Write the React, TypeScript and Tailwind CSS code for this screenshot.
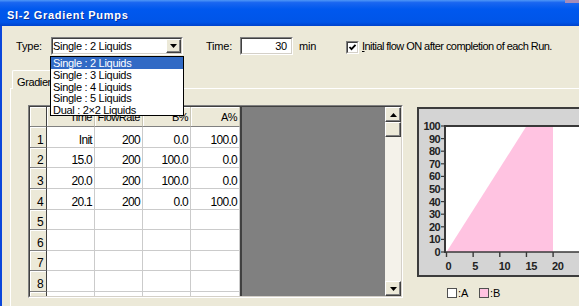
import React from "react";

function Sunken({ className, children }: { className?: string; children?: React.ReactNode }) {
  return (
    <div className={`border border-t-[#808080] border-l-[#808080] border-b-white border-r-white ${className ?? ""}`}>
      <div className="w-full h-full border border-t-[#404040] border-l-[#404040] border-b-[#D4D0C8] border-r-[#D4D0C8] bg-white flex items-center relative">
        {children}
      </div>
    </div>
  );
}

const raised =
  "border border-t-white border-l-white border-b-[#404040] border-r-[#404040] shadow-[inset_-1px_-1px_0_#808080] bg-[#ECE9D8]";

const data: string[][] = [
  ["Init", "200", "0.0", "100.0"],
  ["15.0", "200", "100.0", "0.0"],
  ["20.0", "200", "100.0", "0.0"],
  ["20.1", "200", "0.0", "100.0"],
  ["", "", "", ""],
  ["", "", "", ""],
  ["", "", "", ""],
  ["", "", "", ""],
  ["", "", "", ""],
];

const colW = ["w-[48px]", "w-[48px]", "w-[48px]", "w-[49px]"];
const headers = ["Time", "FlowRate", "B%", "A%"];

const numFont = "font-['Liberation_Sans',Arial,sans-serif] text-[12px] leading-[13px] tracking-[-0.7px]";

function Chart() {
  const yT = [0, 10, 20, 30, 40, 50, 60, 70, 80, 90, 100];
  const xT = [0, 5, 10, 15, 20];
  const lf = "'Liberation Sans',Arial,sans-serif";
  return (
    <svg width={196} height={166} viewBox="419 109 196 166" className="block">
      <rect x={445} y={126} width={200} height={126} fill="#ffffff" />
      <polygon points="446.5,252 526.5,126 553,126 553,252" fill="#FFC3E1" />
      <line x1={444} y1={126} x2={640} y2={126} stroke="#383838" strokeWidth={2} />
      <line x1={445} y1={125} x2={445} y2={253} stroke="#383838" strokeWidth={2} />
      <line x1={444} y1={252} x2={640} y2={252} stroke="#383838" strokeWidth={1.6} />
      {yT.map((v) => {
        const y = 252 - v * 1.26;
        return (
          <g key={v}>
            <line x1={441} y1={y} x2={445} y2={y} stroke="#383838" strokeWidth={1.2} />
            <text x={440} y={y + 4} textAnchor="end" fontSize={11} letterSpacing={-0.6} fontWeight={700} fontFamily={lf} fill="#222">
              {v}
            </text>
          </g>
        );
      })}
      {xT.map((t) => {
        const x = 446.5 + t * 5.33;
        return (
          <g key={t}>
            <line x1={x} y1={252} x2={x} y2={257} stroke="#383838" strokeWidth={1.4} />
            <text x={x - 1} y={270} textAnchor="start" fontSize={11} letterSpacing={-0.4} fontWeight={700} fontFamily={lf} fill="#222">
              {t}
            </text>
          </g>
        );
      })}
    </svg>
  );
}

export default function App() {
  return (
    <div className="relative w-[579px] h-[306px] overflow-hidden bg-[#ECE9D8] flex flex-col text-black font-['Liberation_Sans',Arial,sans-serif]">
      {/* Title bar */}
      <div className="relative h-[26px] shrink-0 flex items-center pl-[7px] pt-[4px] bg-[linear-gradient(to_bottom,#4F97F7_0%,#1A66F0_10%,#0058EE_35%,#0055E8_85%,#0043CC_100%)]">
        <span className="text-white font-bold text-[11px] tracking-[0.7px] [text-shadow:1px_1px_0_#0A2F9A]">
          SI-2 Gradient Pumps
        </span>
        <div className="absolute right-0 top-0 w-[14px] h-[3px] bg-[#A68CB8]" />
      </div>

      {/* Body */}
      <div className="flex-1 flex flex-col border-l-2 border-[#0B47DB] min-h-0">
        {/* Controls */}
        <div className="mt-[11px] h-[18px] shrink-0 flex items-center pl-[14px] text-[11px] tracking-[-0.2px]">
          <span className="w-[35px] shrink-0">Type:</span>
          <Sunken className="w-[132px] h-[18px] shrink-0">
            <span className="pl-[0px] tracking-[-0.3px]">Single : 2 Liquids</span>
            <div className={`absolute right-0 top-0 w-[15px] h-[14px] flex items-center justify-center ${raised}`}>
              <svg width="7" height="4" viewBox="0 0 7 4">
                <polygon points="0,0 7,0 3.5,4" fill="#000" />
              </svg>
            </div>
          </Sunken>
          <span className="ml-[23px] w-[34px] shrink-0">Time:</span>
          <Sunken className="w-[53px] h-[18px] shrink-0">
            <span className="ml-auto pr-[4px]">30</span>
          </Sunken>
          <span className="ml-[6px] w-[47px] shrink-0">min</span>
          <div className="self-start mt-[4px] shrink-0">
            <Sunken className="w-[13px] h-[13px]">
              <svg width="9" height="9" viewBox="0 0 9 9" className="block">
                <polyline points="1.5,4 3.5,6.2 7.5,1.8" fill="none" stroke="#000" strokeWidth="1.8" />
              </svg>
            </Sunken>
          </div>
          <span className="ml-[3px] whitespace-nowrap tracking-[-0.55px]">
            <span className="underline">I</span>nitial flow ON after completion of each Run.
          </span>
        </div>

        {/* Tab strip */}
        <div className="mt-[15px] shrink-0 flex">
          <div className="relative z-10 ml-[10px] mb-[-1px] h-[19px] w-[58px] bg-[#ECE9D8] border-t border-l border-white border-r border-r-[#404040] rounded-tl-[2px] pl-[4px] pt-[3px] text-[11px] tracking-[-0.4px]">
            Gradient
          </div>
        </div>

        {/* Tab panel */}
        <div className="flex-1 ml-[8px] border-t border-l border-white pt-[16px] pl-[17px] flex items-start">
          {/* Grid */}
          <div className="w-[375px] h-[193px] shrink-0 border border-t-[#808080] border-l-[#808080] border-b-white border-r-white">
            <div className="w-full h-full border border-t-[#404040] border-l-[#404040] border-b-[#D4D0C8] border-r-[#D4D0C8] flex overflow-hidden">
              <div className="w-[210px] h-full shrink-0 flex flex-col overflow-hidden bg-white">
                <div className="h-[20px] shrink-0 flex">
                  <div className="w-[17px] shrink-0 bg-[#ECE9D8] border-r border-r-[#404040] border-b border-b-[#808080] shadow-[inset_1px_1px_0_#fff]" />
                  {headers.map((h, i) => (
                    <div
                      key={h}
                      className={`${colW[i]} shrink-0 bg-[#ECE9D8] border-r border-r-[#C8C5B5] border-b border-b-[#808080] shadow-[inset_1px_1px_0_#fff] flex items-end justify-end pr-[2px] pb-[2px] font-['Liberation_Sans',Arial,sans-serif] text-[11px] leading-[13px] tracking-[-0.5px]`}
                    >
                      {h}
                    </div>
                  ))}
                </div>
                {data.map((r, ri) => (
                  <div key={ri} className="h-[20.625px] shrink-0 flex">
                    <div className={`w-[17px] shrink-0 bg-[#ECE9D8] border-r border-r-[#404040] border-b border-b-[#808080] shadow-[inset_1px_1px_0_#fff] flex items-end justify-end pr-[3px] ${numFont}`}>
                      {ri < 8 ? ri + 1 : ""}
                    </div>
                    {r.map((c, ci) => (
                      <div
                        key={ci}
                        className={`${colW[ci]} shrink-0 border-r border-r-[#CBCBCB] border-b border-b-[#CBCBCB] flex items-end justify-end pr-[2px] ${numFont}`}
                      >
                        {c}
                      </div>
                    ))}
                  </div>
                ))}
              </div>
              <div className="w-[2px] shrink-0 bg-[#404040]" />
              <div className="w-[143px] shrink-0 bg-[#808080]" />
              <div className="w-[16px] shrink-0 flex flex-col bg-[#F4F2EA]">
                <div className={`h-[15px] shrink-0 flex items-center justify-center ${raised}`}>
                  <svg width="7" height="4" viewBox="0 0 7 4">
                    <polygon points="0,4 7,4 3.5,0" fill="#000" />
                  </svg>
                </div>
                <div className={`h-[15px] shrink-0 ${raised}`} />
                <div className="flex-1" />
                <div className={`h-[15px] shrink-0 flex items-center justify-center ${raised}`}>
                  <svg width="7" height="4" viewBox="0 0 7 4">
                    <polygon points="0,0 7,0 3.5,4" fill="#000" />
                  </svg>
                </div>
              </div>
            </div>
          </div>

          {/* Chart column */}
          <div className="ml-[14px] shrink-0 flex flex-col">
            <div className="mt-[2px] w-[200px] h-[170px] bg-[#D4D4D4] border-2 border-[#3C3C3C]">
              <Chart />
            </div>
            <div className="mt-[11px] ml-[30px] h-[10px] flex items-center text-[11px]">
              <div className="w-[10px] h-[10px] shrink-0 bg-white border border-[#505050]" />
              <span className="w-[22px] shrink-0 pl-[1px]">:A</span>
              <div className="w-[10px] h-[10px] shrink-0 bg-[#FFC3E1] border border-[#505050]" />
              <span className="pl-[1px]">:B</span>
            </div>
          </div>
        </div>
      </div>

      {/* Dropdown list */}
      <div className="absolute left-[50px] top-[56px] w-[134px] h-[60px] z-20 border border-black bg-white flex flex-col text-[11px] tracking-[-0.3px]">
        <div className="h-[12px] leading-[12px] bg-[#316AC5] text-white pl-[2px]">Single : 2 Liquids</div>
        <div className="h-[11.5px] leading-[12px] pl-[2px]">Single : 3 Liquids</div>
        <div className="h-[11.5px] leading-[12px] pl-[2px]">Single : 4 Liquids</div>
        <div className="h-[11.5px] leading-[12px] pl-[2px]">Single : 5 Liquids</div>
        <div className="h-[11.5px] leading-[12px] pl-[2px]">Dual : 2×2 Liquids</div>
      </div>
    </div>
  );
}
